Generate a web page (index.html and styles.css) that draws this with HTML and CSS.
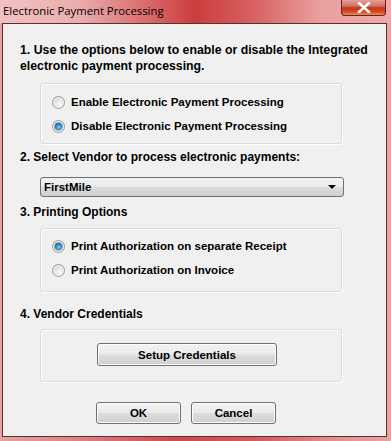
FILE: index.html
```html
<!DOCTYPE html>
<html>
<head>
<meta charset="utf-8">
<link rel="stylesheet" href="styles.css">
</head>
<body>
<div class="window">
  <div class="titlebar">
    <span class="title">Electronic Payment Processing</span>
    <div class="close"><svg width="14" height="11" viewBox="0 0 14 11"><path d="M2 1 L12 10 M12 1 L2 10" stroke="#fff" stroke-width="2.6" stroke-linecap="round"/></svg></div>
  </div>
  <div class="client">
    <div class="heading h1">1. Use the options below to enable or disable the Integrated electronic payment processing.</div>
    <div class="group g1">
      <div class="row"><span class="radio"></span><span class="label">Enable Electronic Payment Processing</span></div>
      <div class="row"><span class="radio checked"></span><span class="label">Disable Electronic Payment Processing</span></div>
    </div>
    <div class="heading h2">2. Select Vendor to process electronic payments:</div>
    <div class="combo"><span class="combo-text">FirstMile</span><span class="arrow"></span></div>
    <div class="heading h3">3. Printing Options</div>
    <div class="group g2">
      <div class="row"><span class="radio checked"></span><span class="label">Print Authorization on separate Receipt</span></div>
      <div class="row"><span class="radio"></span><span class="label">Print Authorization on Invoice</span></div>
    </div>
    <div class="heading h4">4. Vendor Credentials</div>
    <div class="group g3">
      <div class="btn setup">Setup Credentials</div>
    </div>
    <div class="actions">
      <div class="btn ok">OK</div>
      <div class="btn cancel">Cancel</div>
    </div>
  </div>
</div>
</body>
</html>
```
FILE: styles.css
```css
html, body { margin: 0; padding: 0; }
body { width: 391px; height: 441px; overflow: hidden; }
.window {
  width: 391px; height: 441px;
  background: linear-gradient(90deg, #e8a2a2 0%, #dc7878 25%, #cf4a4a 45%, #d35a5a 65%, #e58e8e 85%, #eaa2a2 100%);
  display: flex; flex-direction: column;
}
.titlebar {
  height: 23px; display: flex; align-items: flex-start; justify-content: space-between;
  background: linear-gradient(90deg, #f1c2c2 0%, #ebaeae 20%, #d55a5a 42%, #cc3d3d 50%, #d86262 65%, #eba0a0 82%, #eeaaaa 100%);
}
.title {
  font-family: "Open Sans", "Noto Sans", sans-serif; font-size: 11.3px; color: #000;
  padding: 3px 0 0 3px; line-height: 16px;
}
.close {
  width: 45px; height: 17px; margin-right: 5px; margin-top: -1px;
  border: 1px solid #6b2020; border-top: none; border-radius: 0 0 4px 4px;
  background: linear-gradient(180deg, #e8a8a0 0%, #d47060 45%, #c2361c 55%, #d64a20 80%, #e89060 100%);
  display: flex; align-items: center; justify-content: center; box-sizing: border-box;
}
.client {
  margin: 0 4px 4px 2px; flex: 1;
  background: #f0f0f0; border: 1px solid #5a3030;
  font-family: "Liberation Sans", Arial, sans-serif; font-weight: bold; font-size: 12px; color: #000;
  padding-left: 17px;
}
.heading { line-height: 16px; }
.h1 { margin-top: 18px; width: 358px; font-size: 12.3px; }
.group {
  width: 302px; margin-left: 20px; border: 1px solid #dcdcdc; border-radius: 3px;
  box-shadow: inset 1px 1px 0 #fff, 1px 1px 0 #fff; box-sizing: border-box;
  font-size: 11.5px;
}
.g1 { margin-top: 9px; height: 61px; padding-top: 6px; }
.g2 { margin-top: 8px; height: 64px; padding-top: 5px; }
.g3 { margin-top: 7px; height: 53px; padding-top: 13px; }
.row { height: 24px; display: flex; align-items: center; padding-left: 11px; }
.label { margin-left: 6px; }
.radio {
  width: 13px; height: 13px; border-radius: 50%; box-sizing: border-box;
  border: 1px solid #9a9a9a; position: relative;
  background: radial-gradient(circle at 60% 65%, #fafafa 0%, #e6e6e6 45%, #c8c8c8 100%);
  box-shadow: inset 0 0 0 1px #f4f4f4;
}
.radio.checked::after {
  content: ""; position: absolute; left: 2px; top: 2px; width: 7px; height: 7px; border-radius: 50%;
  background: radial-gradient(circle at 55% 60%, #8fd8ff 0%, #3c9ad8 35%, #1b5f94 75%, #1a4a78 100%);
  box-shadow: 0 0 0 0.5px #2a5a86;
}
.h2 { margin-top: 5px; }
.combo {
  margin: 12px 0 0 20px; width: 304px; height: 20px; box-sizing: border-box;
  border: 1px solid #707070; border-radius: 3px;
  background: linear-gradient(180deg, #f2f2f2 0%, #ebebeb 48%, #dddddd 52%, #cfcfcf 100%);
  display: flex; align-items: center; justify-content: space-between; padding: 0 6px 0 3px;
  font-size: 11.5px;
}
.combo-text { line-height: 16px; }
.arrow { width: 0; height: 0; border-left: 4px solid transparent; border-right: 4px solid transparent; border-top: 4px solid #000; margin-right: 1px; }
.h3 { margin-top: 7px; }
.h4 { margin-top: 14px; }
.btn {
  height: 23px; box-sizing: border-box; border: 1px solid #707070; border-radius: 3px;
  background: linear-gradient(180deg, #f2f2f2 0%, #ebebeb 48%, #dddddd 52%, #cfcfcf 100%);
  box-shadow: inset 0 0 0 1px #fcfcfc;
  display: flex; align-items: center; justify-content: center; line-height: 16px;
  font-size: 11.5px;
}
.setup { width: 180px; margin-left: 56px; }
.actions { display: flex; gap: 10px; margin-top: 20px; margin-left: 76px; }
.ok, .cancel { width: 85px; height: 22px; }
```
